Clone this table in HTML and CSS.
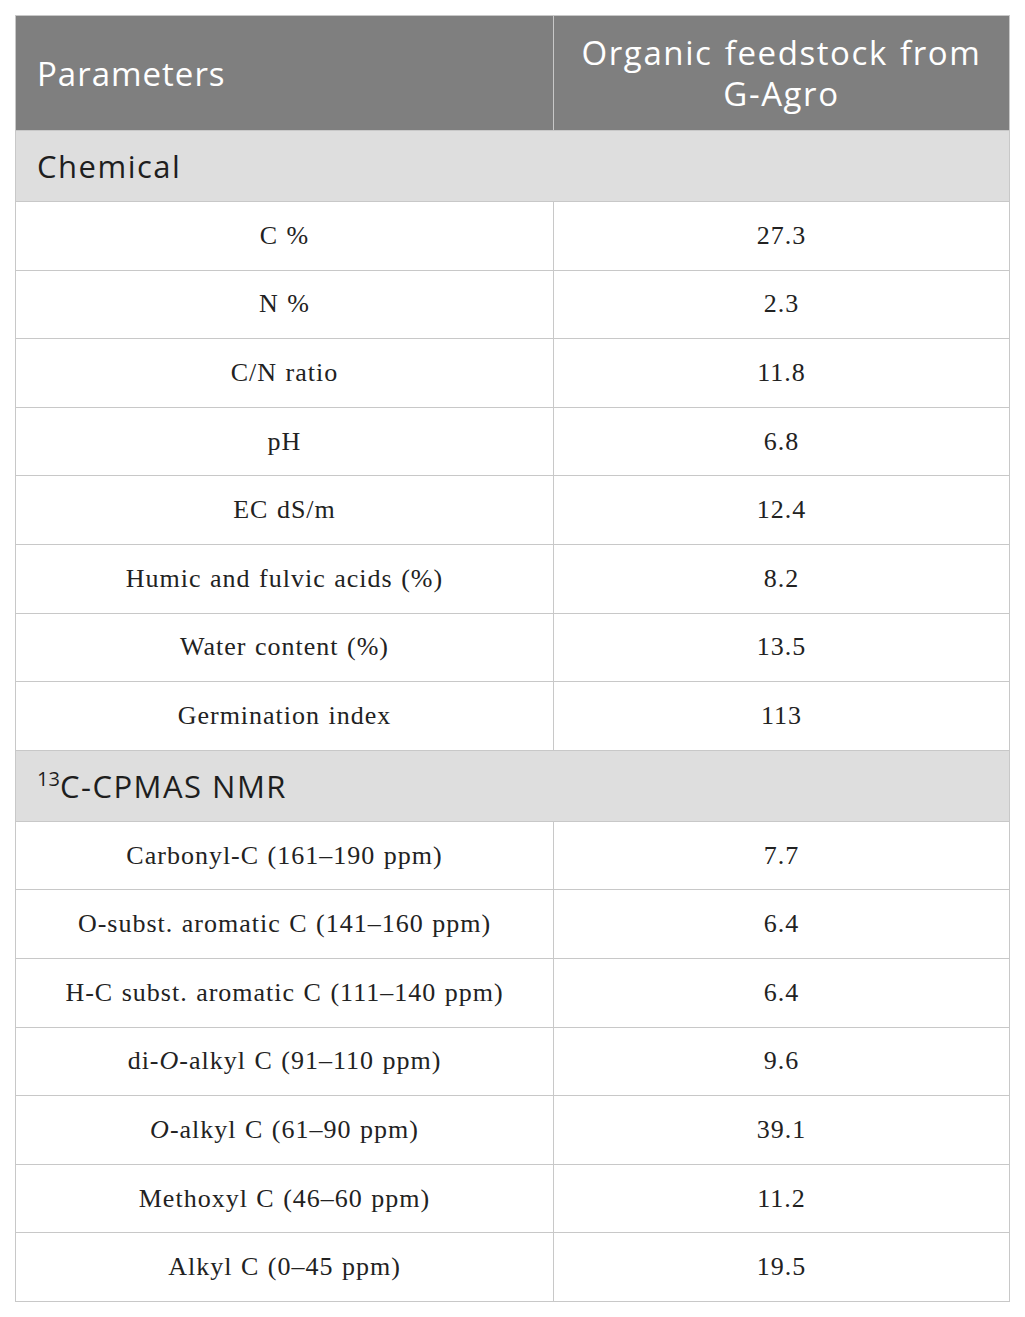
FILE: index.html
```html
<!DOCTYPE html>
<html lang="en">
<head>
  <meta charset="UTF-8">
  <title>Organic feedstock parameters</title>
  <link rel="stylesheet" href="styles.css">
</head>
<body>
  <table class="data-table">
    <thead>
      <tr>
        <th class="col-param">Parameters</th>
        <th class="col-value">Organic feedstock from <span class="nowrap">G-Agro</span></th>
      </tr>
    </thead>
    <tbody>
      <tr class="group"><td colspan="2">Chemical</td></tr>
      <tr><td>C %</td><td>27.3</td></tr>
      <tr><td>N %</td><td>2.3</td></tr>
      <tr><td>C/N ratio</td><td>11.8</td></tr>
      <tr><td>pH</td><td>6.8</td></tr>
      <tr><td>EC dS/m</td><td>12.4</td></tr>
      <tr><td>Humic and fulvic acids (%)</td><td>8.2</td></tr>
      <tr><td>Water content (%)</td><td>13.5</td></tr>
      <tr><td>Germination index</td><td>113</td></tr>
      <tr class="group"><td colspan="2"><sup>13</sup>C-CPMAS NMR</td></tr>
      <tr><td>Carbonyl-C (161–190 ppm)</td><td>7.7</td></tr>
      <tr><td>O-subst. aromatic C (141–160 ppm)</td><td>6.4</td></tr>
      <tr><td>H-C subst. aromatic C (111–140 ppm)</td><td>6.4</td></tr>
      <tr><td>di-<i>O</i>-alkyl C (91–110 ppm)</td><td>9.6</td></tr>
      <tr><td><i>O</i>-alkyl C (61–90 ppm)</td><td>39.1</td></tr>
      <tr><td>Methoxyl C (46–60 ppm)</td><td>11.2</td></tr>
      <tr><td>Alkyl C (0–45 ppm)</td><td>19.5</td></tr>
    </tbody>
  </table>
</body>
</html>
```

FILE: styles.css
```css
body { margin: 15px; background: #ffffff; }
.data-table { width: 995px; border-collapse: collapse; table-layout: fixed; }
.data-table th, .data-table td { border: 1px solid #c8c8c8; padding: 0; box-sizing: border-box; }
.data-table th { background: #7f7f7f; color: #ffffff; font-family: "Open Sans", sans-serif; font-weight: 400; font-size: 33px; letter-spacing: 1px; line-height: 41px; height: 115px; }
.col-param { width: 538px; text-align: left; padding-left: 21px !important; }
.col-value { text-align: center; letter-spacing: 1.6px !important; word-spacing: 2px; padding: 0 6px !important; }
.nowrap { white-space: nowrap; }
.data-table td { font-family: "Liberation Serif", serif; font-size: 26px; letter-spacing: 1px; word-spacing: 1px; color: #222222; text-align: center; height: 68.6px; }
.group td { background: #dedede; text-align: left; padding-left: 21px; height: 71px; font-family: "Open Sans", sans-serif; font-size: 31px; letter-spacing: 1.5px; word-spacing: 0; color: #1e1e1e; }
.group sup { font-size: 20px; letter-spacing: 0; vertical-align: 12px; line-height: 0; }
```
